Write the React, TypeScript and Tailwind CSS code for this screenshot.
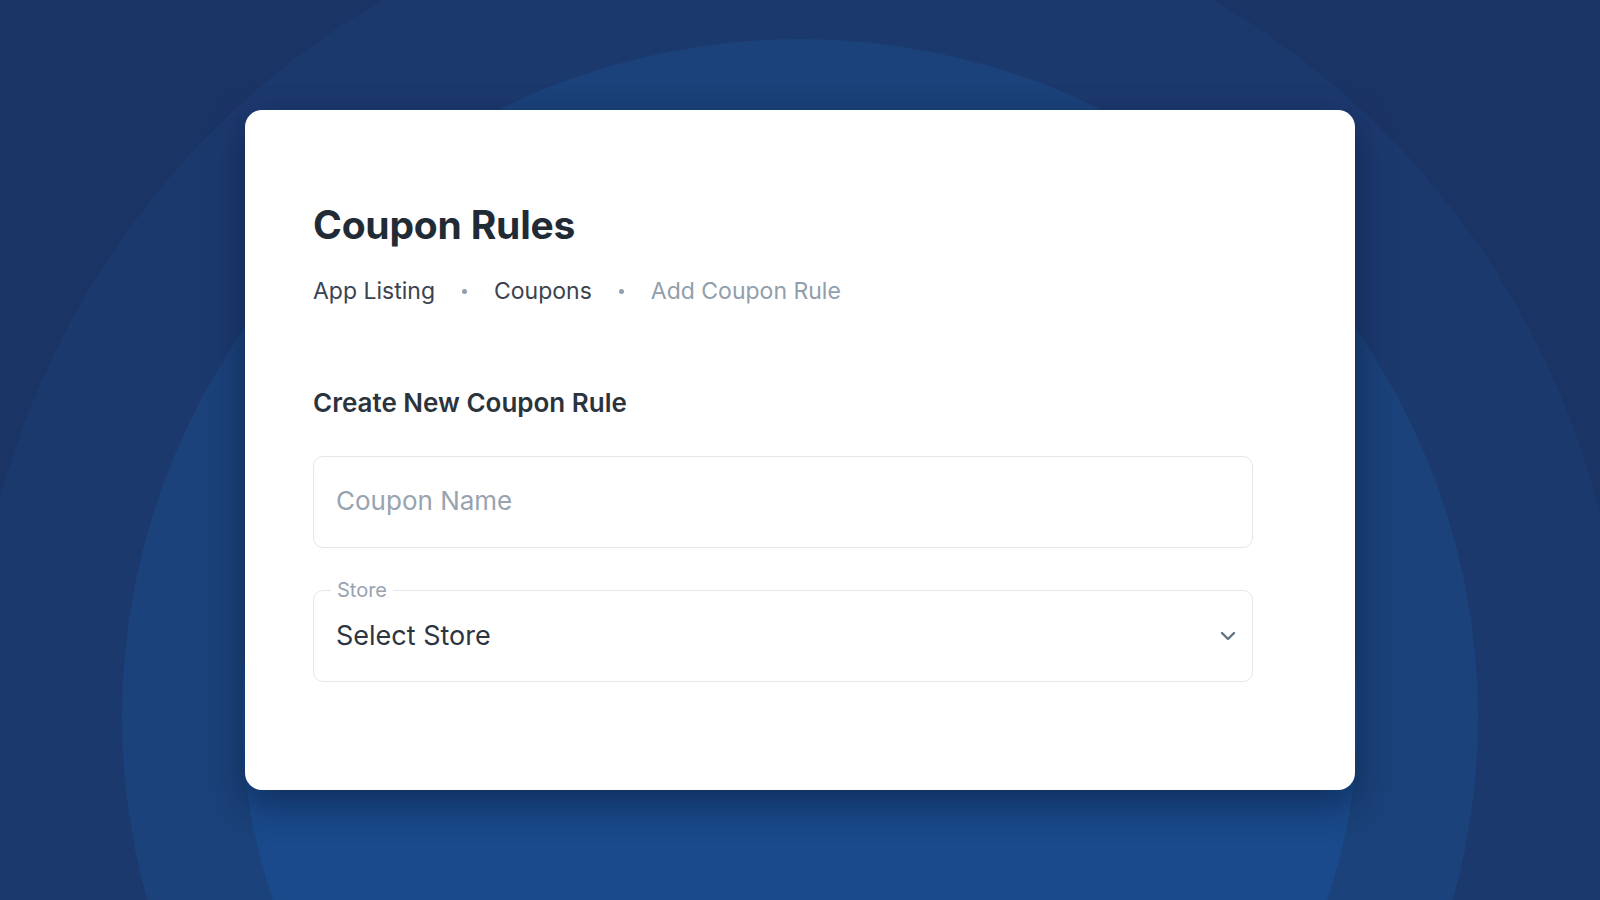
import React from "react";

const crumbs = ["App Listing", "Coupons"];

function Chevron() {
  return (
    <svg width="16" height="10" viewBox="0 0 16 10" fill="none">
      <path
        d="M2 2l6 6 6-6"
        stroke="#637381"
        strokeWidth="2.4"
        strokeLinecap="round"
        strokeLinejoin="round"
      />
    </svg>
  );
}

export default function App() {
  return (
    <div
      className="relative flex h-screen w-full items-center justify-center overflow-hidden bg-[#1b3466]"
      style={{ fontFamily: "Inter, 'Noto Sans', sans-serif" }}
    >
      {/* background rings, all around one centre */}
      <div className="absolute left-[-29px] top-[-112px] h-[1654px] w-[1654px] rounded-full bg-[#1c396e]" />
      <div className="absolute left-[122px] top-[39px] h-[1356px] w-[1356px] rounded-full bg-[#1b427a]" />
      <div className="absolute left-[242px] top-[159px] h-[1116px] w-[1116px] rounded-full bg-[#1a4a8b]" />

      <div className="relative z-10 w-[1110px] rounded-[17px] bg-white pb-[108px] pl-[68px] pt-[92px] shadow-[0_14px_36px_rgba(5,15,40,0.45)]">
        <h1 className="text-[39px] font-bold leading-[46px] tracking-[-0.2px] text-[#212b36]">
          Coupon Rules
        </h1>

        <nav className="mt-[29px] flex items-center text-[23px] leading-[28px]">
          {crumbs.map((c) => (
            <React.Fragment key={c}>
              <span className="text-[#3a434e]">{c}</span>
              <span className="mx-[27px] h-[5px] w-[5px] rounded-full bg-[#919eab]" />
            </React.Fragment>
          ))}
          <span className="text-[#919eab]">Add Coupon Rule</span>
        </nav>

        <h2 className="mt-[82px] text-[26px] font-semibold leading-[32px] text-[#2b333d]">
          Create New Coupon Rule
        </h2>

        <div className="mt-[37px] flex w-[940px] flex-col gap-[42px]">
          <div className="flex h-[92px] items-center rounded-[10px] border-[1.5px] border-[#e3e7eb] px-[22px] pb-[3px]">
            <input
              placeholder="Coupon Name"
              className="w-full bg-transparent text-[26px] text-[#212b36] outline-none placeholder:text-[#98a3af]"
            />
          </div>

          <div className="relative flex h-[92px] items-center justify-between rounded-[10px] border-[1.5px] border-[#e3e7eb] pl-[22px] pr-[16px]">
            <span className="absolute left-[17px] top-[-13px] bg-white px-[6px] text-[20px] leading-[24px] text-[#98a3af]">
              Store
            </span>
            <span className="text-[27px] text-[#2d3540]">Select Store</span>
            <Chevron />
          </div>
        </div>
      </div>
    </div>
  );
}
